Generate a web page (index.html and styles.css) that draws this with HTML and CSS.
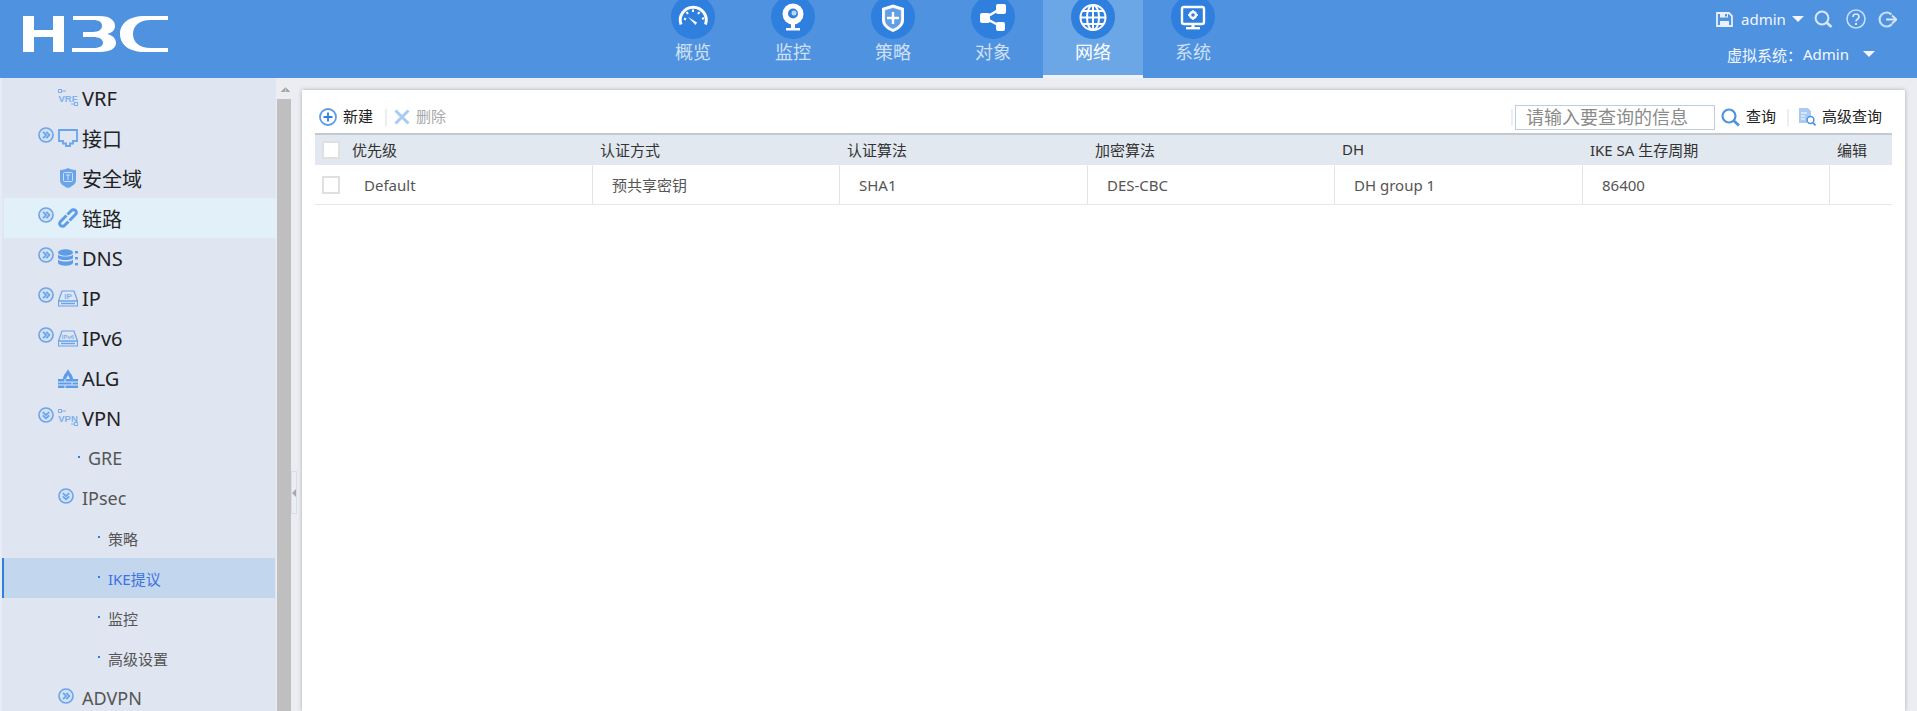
FILE: index.html
```html
<!DOCTYPE html>
<html lang="zh-CN">
<head>
<meta charset="utf-8">
<title>H3C 网络</title>
<link rel="stylesheet" href="styles.css">
</head>
<body>
<svg class="defs" width="0" height="0" aria-hidden="true">
  <symbol id="arrow" viewBox="0 0 15 15">
    <circle cx="7.5" cy="7.5" r="6.6" fill="#d3e2f6" stroke="#6aa4ea" stroke-width="1.5"/>
    <path d="M4.800 4.500l2.800 3-2.800 3M7.800 4.500l2.800 3-2.800 3" fill="none" stroke="#6aa4ea" stroke-width="1.700"/>
  </symbol>
  <symbol id="arrow-open" viewBox="0 0 15 15">
    <circle cx="7.5" cy="7.5" r="6.6" fill="#d3e2f6" stroke="#6aa4ea" stroke-width="1.5"/>
    <path d="M4.500 4.800l3 2.800 3-2.800M4.500 7.800l3 2.800 3-2.800" fill="none" stroke="#6aa4ea" stroke-width="1.700"/>
  </symbol>
</svg>

<header class="top">
  <div class="brand">
    <svg class="logo" width="145" height="36" viewBox="0 0 145 36"><path fill="#fff" d="M0 0H11V14H30V0H41V36H30V21H11V36H0Z"/><path fill="#fff" d="M50 0H76C88 0 92 5 92 10C92 14 89 17 84 18C89 19 93 22 93 27C93 32 88 36 76 36H49V32H70C76 32 80 30 80 27C80 23 76 21 70 21H60V16H70C76 16 79 13 79 10C79 6 76 4 70 4H50Z"/><path fill="#fff" d="M145 0V4H128C116 4 110 10 110 18C110 26 116 32 128 32H145V36H122C105 36 97 28 97 18C97 8 105 0 122 0Z"/></svg>
  </div>
  <nav class="nav">
    <a class="tab"><span class="disc"><svg viewBox="0 0 44 44" width="44" height="44"><path d="M10 29.500a13 13 0 1 1 24.500 0" fill="none" stroke="#fff" stroke-width="3"/><path d="M15 24.500l-2-1M17 19l-1.500-2M22 17v-2.500M27 19l1.500-2M31 24l2-1" stroke="#fff" stroke-width="2"/><path d="M17 22l9 5.500-1.500 2.500z" fill="#fff"/></svg></span><span class="tab-label">概览</span></a>
    <a class="tab"><span class="disc"><svg viewBox="0 0 44 44" width="44" height="44"><circle cx="22" cy="19" r="10.500" fill="#fff"/><circle cx="22" cy="18.500" r="5" fill="#2e7fde"/><circle cx="23" cy="18" r="2.500" fill="#bcd7f5"/><path d="M20 29h4v4h-4z" fill="#fff"/><rect x="15" y="33" width="14" height="2.500" fill="#fff"/></svg></span><span class="tab-label">监控</span></a>
    <a class="tab"><span class="disc"><svg viewBox="0 0 44 44" width="44" height="44"><path d="M22 9.500l11 3.500v12c0 6-5 9.500-11 12-6-2.500-11-6-11-12V13z" fill="#fff"/><path d="M22 12.500l8.300 2.500v10c0 4.500-3.700 7.200-8.300 9.200-4.600-2-8.300-4.700-8.300-9.200V15z" fill="#2e7fde" stroke="#fff" stroke-width=".6" fill-opacity=".75"/><path d="M22 17v12M16 23h12" stroke="#fff" stroke-width="2.400"/></svg></span><span class="tab-label">策略</span></a>
    <a class="tab"><span class="disc"><svg viewBox="0 0 44 44" width="44" height="44"><path d="M29 14L14 23l15 8" fill="none" stroke="#fff" stroke-width="2.500"/><rect x="25" y="9" width="10" height="10" rx="2" fill="#fff"/><rect x="9" y="18" width="10" height="10" rx="2" fill="#fff"/><rect x="25" y="27" width="9" height="9" rx="2" fill="#fff"/></svg></span><span class="tab-label">对象</span></a>
    <a class="tab tab-on"><span class="disc"><svg viewBox="0 0 44 44" width="44" height="44"><g fill="none" stroke="#fff" stroke-width="2"><circle cx="22" cy="22.500" r="12.500"/><ellipse cx="22" cy="22.500" rx="6" ry="12.500"/><path d="M22 10v25M10 22.500h24M11.500 16h21M11.500 29h21"/></g></svg></span><span class="tab-label">网络</span></a>
    <a class="tab"><span class="disc"><svg viewBox="0 0 44 44" width="44" height="44"><rect x="11" y="12" width="22" height="17" rx="2" fill="none" stroke="#fff" stroke-width="2.400"/><circle cx="22" cy="20" r="3" fill="none" stroke="#fff" stroke-width="2.400"/><path d="M22 15v1.500M22 23.500v1.500M17 20h1.500M25.500 20H27" stroke="#fff" stroke-width="1.500"/><path d="M20.500 29h3v3h-3z" fill="#fff"/><rect x="15" y="32" width="14" height="2.400" fill="#fff"/></svg></span><span class="tab-label">系统</span></a>
  </nav>
  <div class="account">
    <div class="acct-row acct-tools">
      <svg class="save" width="17" height="15" viewBox="0 0 17 15"><path d="M1 1h12l3 3v10H1z" fill="none" stroke="#e7f0fb" stroke-width="1.800"/><path d="M4 1h8v4.500H4zM4 9h9v5H4z" fill="#e7f0fb"/><path d="M9 2h2v2.500H9z" fill="#4f92e0"/></svg>
      <span class="acct-name">admin</span>
      <span class="caret caret-a"></span>
      <svg class="tool-search" width="19" height="18" viewBox="0 0 19 18"><circle cx="8" cy="8" r="6.400" fill="none" stroke="#dbe8f9" stroke-width="2"/><path d="M12.500 12.500l5 4.500" stroke="#dbe8f9" stroke-width="2.600"/></svg>
      <svg class="tool-help" width="20" height="20" viewBox="0 0 20 20"><circle cx="10" cy="10" r="9" fill="none" stroke="#c9ddf6" stroke-width="1.600"/><path d="M7 8c0-4 6-4 6 0 0 2-3 2-3 4.500" fill="none" stroke="#dbe8f9" stroke-width="1.700"/><rect x="9" y="14" width="2" height="2" fill="#dbe8f9"/></svg>
      <svg class="tool-exit" width="20" height="17" viewBox="0 0 20 17"><path d="M14.500 3.500A7 7 0 1 0 15 13" fill="none" stroke="#c9ddf6" stroke-width="2.200"/><path d="M9 8.500h10" stroke="#dbe8f9" stroke-width="2"/><path d="M15 4.500l4.500 4-4.500 4" fill="none" stroke="#dbe8f9" stroke-width="1.800"/></svg>
    </div>
    <div class="acct-row acct-vsys">
      <span>虚拟系统：</span><span class="vsys-name">Admin</span><span class="caret caret-b"></span>
    </div>
  </div>
</header>

<div class="body">
  <aside class="side">
    <div class="row"><svg class="ic ic-solo" width="20" height="18" viewBox="0 0 20 18"><path d="M3.500 2H8M13 15h3.500" stroke="#7fb0ec" fill="none"/><rect x="0.500" y="0.500" width="3" height="3" fill="none" stroke="#7fb0ec"/><rect x="16.500" y="13.500" width="3" height="3" fill="none" stroke="#7fb0ec"/><text x="10" y="12.500" class="ic-text">VRF</text></svg><span>VRF</span></div>
    <div class="row"><svg class="arrow"><use href="#arrow"/></svg><svg class="ic" width="20" height="18" viewBox="0 0 20 18"><path d="M1 1h18v11h-4v2.500h-3V17H8v-2.500H5V12H1z" fill="none" stroke="#6aa4ea" stroke-width="1.800"/></svg><span>接口</span></div>
    <div class="row"><svg class="ic ic-solo" width="20" height="22" viewBox="0 0 20 22"><path d="M10 1c3 1.500 6 2 8 2v10c0 4-4 6.500-8 8-4-1.500-8-4-8-8V3c2 0 5-.5 8-2z" fill="#6aa4ea"/><rect x="5.500" y="5.500" width="9" height="9" rx="1" fill="none" stroke="#cfe0f5"/><path d="M8 8h4M10 8v5" stroke="#cfe0f5"/></svg><span>安全域</span></div>
    <div class="row row-hover"><svg class="arrow"><use href="#arrow"/></svg><svg class="ic" width="20" height="20" viewBox="0 0 20 20"><g fill="none" stroke="#5c9ce8" stroke-width="3"><path d="M8.500 7.500L2.500 13.500a2.800 2.800 0 0 0 0 4 2.800 2.800 0 0 0 4 0L10.500 13.500"/><path d="M11.500 12.500L17.500 6.500a2.800 2.800 0 0 0 0-4 2.800 2.800 0 0 0-4 0L9.500 6.500"/></g></svg><span>链路</span></div>
    <div class="row"><svg class="arrow"><use href="#arrow"/></svg><svg class="ic" width="20" height="18" viewBox="0 0 20 18"><g fill="#5c9ce8"><ellipse cx="7.500" cy="3.500" rx="7.500" ry="3.200"/><path d="M0 5.500c1.500 2.800 13.500 2.800 15 0V9c-1.500 2.800-13.500 2.800-15 0z"/><path d="M0 10.500c1.500 2.800 13.500 2.800 15 0V14c-1.500 3.500-13.500 3.500-15 0z"/><rect x="17" y="2" width="3" height="2.400"/><rect x="17" y="8" width="3" height="2.400"/><rect x="17" y="14" width="3" height="2.400"/></g></svg><span>DNS</span></div>
    <div class="row"><svg class="arrow"><use href="#arrow"/></svg><svg class="ic" width="20" height="17" viewBox="0 0 20 17"><path d="M4 1h12l3.500 10v5H.5V11z" fill="none" stroke="#6aa4ea" stroke-width="1.200"/><path d="M.5 11h19M3 13.500h14" stroke="#6aa4ea" stroke-width="1.400"/><text x="10" y="8.500" class="ic-text ic-text-b">IP</text></svg><span>IP</span></div>
    <div class="row"><svg class="arrow"><use href="#arrow"/></svg><svg class="ic" width="20" height="17" viewBox="0 0 20 17"><path d="M4 1h12l3.500 10v5H.5V11z" fill="none" stroke="#6aa4ea" stroke-width="1.200"/><path d="M.5 11h19M3 13.500h14" stroke="#6aa4ea" stroke-width="1.400"/><text x="10" y="8.500" class="ic-text ic-text-s">IPv6</text></svg><span>IPv6</span></div>
    <div class="row"><svg class="ic ic-solo" width="20" height="19" viewBox="0 0 20 19"><path d="M10 0c1 3 5 6 5 10H12l-2-4-2 4H5c0-4 4-7 5-10z" fill="#5c9ce8"/><path d="M0 10h20v9H0z" fill="#5c9ce8"/><path d="M0 13h20M0 16h20M7 10v3M14 13v3M7 16v3" stroke="#dfe5f1"/></svg><span>ALG</span></div>
    <div class="row"><svg class="arrow"><use href="#arrow-open"/></svg><svg class="ic" width="20" height="18" viewBox="0 0 20 18"><path d="M3.500 2H8M13 15h3.500" stroke="#7fb0ec" fill="none"/><rect x="0.500" y="0.500" width="3" height="3" fill="none" stroke="#7fb0ec"/><rect x="16.500" y="13.500" width="3" height="3" fill="none" stroke="#7fb0ec"/><text x="10" y="12.500" class="ic-text">VPN</text></svg><span>VPN</span></div>
    <div class="row row-sub"><i class="dot"></i><span>GRE</span></div>
    <div class="row row-sub row-group"><svg class="arrow"><use href="#arrow-open"/></svg><span>IPsec</span></div>
    <div class="row row-leaf"><i class="dot"></i><span>策略</span></div>
    <div class="row row-leaf row-on"><i class="dot"></i><span>IKE提议</span></div>
    <div class="row row-leaf"><i class="dot"></i><span>监控</span></div>
    <div class="row row-leaf"><i class="dot"></i><span>高级设置</span></div>
    <div class="row row-sub row-group"><svg class="arrow"><use href="#arrow"/></svg><span>ADVPN</span></div>
  </aside>
  <div class="scroll"><span class="scroll-up"></span><span class="scroll-thumb"></span></div>

  <main class="main">
    <button class="grip" type="button" aria-label="收起"><i></i></button>
    <section class="card">
      <div class="toolbar">
        <svg class="t-new" width="18" height="18" viewBox="0 0 18 18"><circle cx="9" cy="9" r="8" fill="none" stroke="#5c9ce8" stroke-width="1.800"/><path d="M9 4.500v9M4.500 9h9" stroke="#2e7fde" stroke-width="1.800"/></svg>
        <span class="t-label">新建</span>
        <i class="t-sep t-sep-a"></i>
        <svg class="t-del" width="16" height="16" viewBox="0 0 16 16"><path d="M1.500 1.500l13 13M14.500 1.500l-13 13" stroke="#a9cbf2" stroke-width="3"/></svg>
        <span class="t-label t-off">删除</span>
        <div class="t-right">
          <i class="t-sep t-sep-b"></i>
          <input class="search" type="text" placeholder="请输入要查询的信息">
          <svg class="t-find" width="19" height="19" viewBox="0 0 19 19"><circle cx="8" cy="8" r="6.500" fill="none" stroke="#4f92e0" stroke-width="2.200"/><path d="M12.500 12.500l5.500 5" stroke="#4f92e0" stroke-width="2.800"/></svg>
          <span class="t-label">查询</span>
          <i class="t-sep t-sep-c"></i>
          <svg class="t-adv" width="18" height="18" viewBox="0 0 18 18"><path d="M1 0h9l3 3v6H9v6H1z" fill="#a9cbf2"/><path d="M3 5h6M3 8h4M3 11h4" stroke="#fff"/><circle cx="12.500" cy="12" r="3.400" fill="#fff" stroke="#4f92e0" stroke-width="1.500"/><path d="M15 14.500l2.500 3" stroke="#4f92e0" stroke-width="1.800"/></svg>
          <span class="t-label">高级查询</span>
        </div>
      </div>
      <table class="grid">
        <colgroup><col class="c1"><col class="c2"><col class="c3"><col class="c4"><col class="c5"><col class="c6"><col class="c7"></colgroup>
        <thead>
          <tr><th><span class="cell-first"><i class="check"></i><span class="th-text">优先级</span></span></th><th><span class="th-text">认证方式</span></th><th><span class="th-text">认证算法</span></th><th><span class="th-text">加密算法</span></th><th><span class="th-text">DH</span></th><th><span class="th-text">IKE SA 生存周期</span></th><th><span class="th-text">编辑</span></th></tr>
        </thead>
        <tbody>
          <tr><td><span class="cell-first cell-first-row"><i class="check"></i><span>Default</span></span></td><td>预共享密钥</td><td>SHA1</td><td>DES-CBC</td><td>DH group 1</td><td>86400</td><td></td></tr>
        </tbody>
      </table>
    </section>
  </main>
</div>
</body>
</html>
```

FILE: styles.css
```css
* { box-sizing: border-box; }
html, body { height: 100%; }
body {
  margin: 0;
  overflow: hidden;
  display: flex;
  flex-direction: column;
  background: #ecedf3;
  color: #333;
  font-family: "Noto Sans", "Noto Sans CJK SC", sans-serif;
  font-size: 15px;
}
.defs { position: absolute; }

/* header */
.top {
  flex: none;
  height: 78px;
  display: flex;
  background: #4f92e0;
  overflow: hidden;
}
.brand { width: 643px; padding: 16px 0 0 23px; }
.logo { display: block; }
.nav { width: 600px; display: flex; }
.tab {
  width: 100px;
  height: 78px;
  display: flex;
  flex-direction: column;
  align-items: center;
  color: #cfe0f5;
  font-size: 18px;
  line-height: 26px;
}
.tab-on { background: #6ba6e6; color: #fff; border-bottom: 3px solid #eef2f9; }
.disc {
  flex: none;
  width: 44px;
  height: 44px;
  margin-top: -5px;
  border-radius: 50%;
  background: #2e7fde;
}
.disc svg { display: block; }

.account { flex: 1; color: #f3f7fd; }
.acct-row { display: flex; align-items: center; white-space: nowrap; }
.acct-tools { height: 20px; margin-top: 9px; padding-left: 473px; }
.acct-name { margin-left: 8px; line-height: 20px; }
.caret { width: 0; height: 0; border-style: solid; border-color: #f3f7fd transparent transparent; }
.caret-a { margin-left: 6px; border-width: 6px 6.5px 0; }
.tool-search { margin-left: 10px; }
.tool-help { margin-left: 13px; }
.tool-exit { margin-left: 11px; }
.acct-vsys { height: 22px; margin-top: 14px; padding-left: 484px; }
.vsys-name { margin-left: 1px; }
.caret-b { margin-left: 14px; border-width: 6px 6px 0; }

/* page body */
.body { flex: 1; min-height: 0; display: flex; }

.side {
  flex: none;
  width: 276px;
  overflow: hidden;
  background: #dfe5f1;
  border-left: 2px solid #e6ecf8;
}
.row {
  height: 40px;
  display: flex;
  align-items: center;
  padding-left: 36px;
  color: #222;
  font-size: 20px;
  white-space: nowrap;
}
.arrow { flex: none; width: 16px; height: 16px; margin: -6px 4px 0 0; }
.ic { flex: none; margin-right: 4px; }
.ic-solo { margin-left: 20px; }
.ic-text { font: 700 9.5px "Liberation Sans", sans-serif; fill: #7fb0ec; text-anchor: middle; }
.ic-text-b { font-size: 8px; }
.ic-text-s { font-size: 6px; }
.row-hover { margin-left: 2px; padding-left: 34px; background: #e2f0fa; }
.row-sub { padding-left: 76px; font-size: 18px; color: #555; }
.row-group { padding-left: 56px; }
.row-group .arrow { margin-right: 8px; margin-top: -4px; }
.row-leaf { padding-left: 96px; font-size: 15px; color: #555; }
.row-on { padding-left: 94px; margin-right: 1px; background: #c2d6ee; border-left: 2px solid #2f7fdd; color: #3f72e0; }
.dot { flex: none; width: 2px; height: 2px; margin-right: 8px; background: #2e7fde; margin-top: -2px; }

.scroll {
  flex: none;
  width: 15px;
  padding-left: 1px;
  display: flex;
  flex-direction: column;
  background: #ecedf3;
}
.scroll-up {
  flex: none;
  width: 9px;
  height: 21px;
  margin-left: 4px;
  border-style: solid;
  border-width: 9px 0 0;
  border-color: transparent;
  background: linear-gradient(to top left, #a9a9a9 50%, transparent 50%) left top / 50% 5px no-repeat,
              linear-gradient(to top right, #a9a9a9 50%, transparent 50%) right top / 50% 5px no-repeat;
  background-origin: content-box;
  background-clip: content-box;
}
.scroll-thumb { flex: 1; background: #bfbfbf; }

.main {
  position: relative;
  flex: 1;
  min-width: 0;
  display: flex;
  padding: 12px 12px 0 11px;
}
.grip {
  position: absolute;
  left: 0;
  top: 393px;
  width: 6px;
  height: 43px;
  padding: 0;
  background: #eceef6;
  border: 1px solid #d9dde9;
  display: flex;
  align-items: center;
}
.grip i { width: 0; height: 0; border-style: solid; border-width: 4px 4px 4px 0; border-color: transparent #a9a9a9 transparent transparent; }

.card {
  flex: 1;
  min-width: 0;
  padding: 0 13px;
  background: #fff;
  box-shadow: 0 0 4px rgba(0, 0, 0, .28);
}
.toolbar {
  height: 43px;
  padding: 11px 10px 0 4px;
  display: flex;
  align-items: center;
  color: #222;
  font-size: 15px;
}
.t-label { white-space: nowrap; margin-bottom: 3px; }
.t-new { margin-right: 6px; }
.t-sep { flex: none; width: 2px; height: 17px; background: #eceef2; }
.t-sep-a { margin: 0 7px 0 12px; }
.t-off { color: #a9a9a9; margin-left: 6px; }
.t-right { margin-left: auto; display: flex; align-items: center; }
.t-sep-b { margin-right: 2px; }
.search {
  width: 200px;
  height: 25px;
  padding: 0 0 0 10px;
  border: 1px solid #bccde3;
  outline: 0;
  font: 18px "Noto Sans", "Noto Sans CJK SC", sans-serif;
  background: #fff;
}
.search::placeholder { color: #8a8a8a; opacity: 1; }
.t-find { margin: 0 6px 0 6px; }
.t-sep-c { margin: 0 9px 0 11px; }
.t-adv { margin-right: 6px; }

.grid {
  width: 1577px;
  table-layout: fixed;
  border-collapse: separate;
  border-spacing: 0;
  font-size: 15px;
}
.c1 { width: 278px; }
.c2, .c4 { width: 247px; }
.c3, .c5 { width: 248px; }
.c6 { width: 247px; }
.c7 { width: 62px; }
.grid th {
  height: 32px;
  padding: 0 0 0 7px;
  background: #e1e8ef;
  border-top: 2px solid #c4c9d0;
  color: #333;
  font-weight: 400;
  text-align: left;
  white-space: nowrap;
}
.th-text { display: block; margin-bottom: 2px; }
.grid td {
  height: 40px;
  padding: 0 0 0 19px;
  border-right: 1px solid #e4e4e4;
  border-bottom: 1px solid #e8e8e8;
  color: #555;
  white-space: nowrap;
}
.grid td:first-child { padding-left: 7px; }
.grid td:last-child { border-right: 0; }
.cell-first { display: flex; align-items: center; }
.check {
  flex: none;
  width: 18px;
  height: 18px;
  margin-right: 12px;
  background: #fff;
  border: 2px solid #e0e0e0;
}
.cell-first-row .check { margin-right: 24px; }
```
